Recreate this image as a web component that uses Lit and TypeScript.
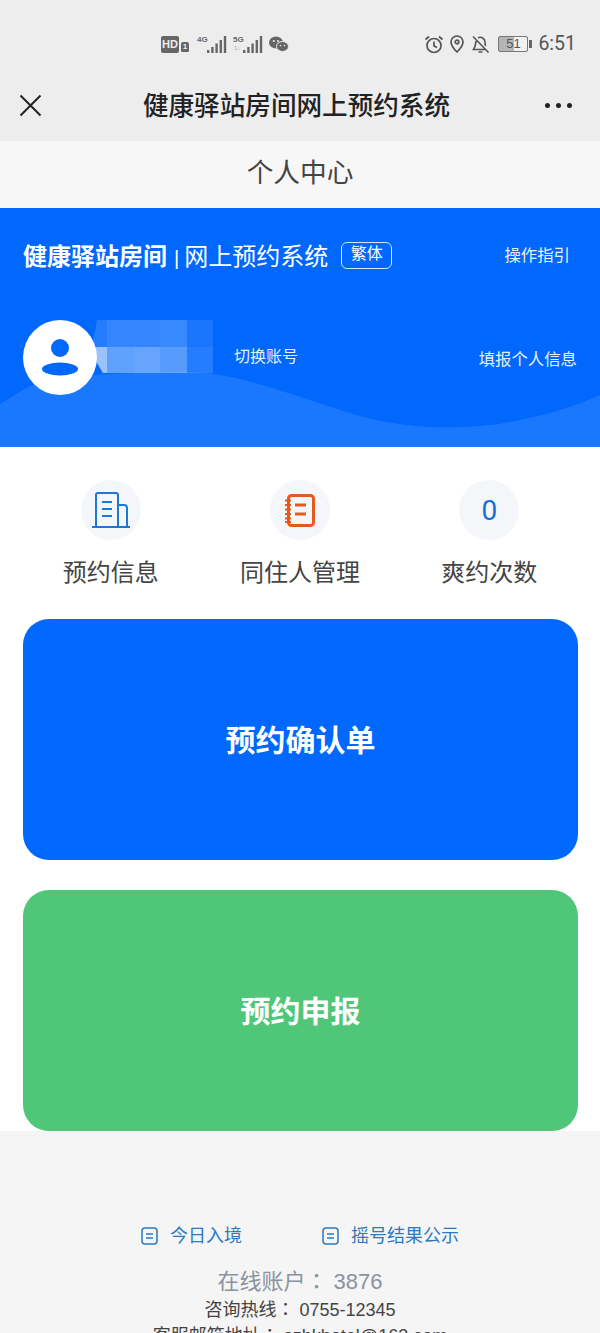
import { LitElement, css, html, svg } from 'lit'
import { customElement } from 'lit/decorators.js'

const bars = svg`<rect x="10" y="15" width="2.4" height="3" /><rect x="14.200" y="12" width="2.4" height="6" /><rect x="18.400" y="8.500" width="2.4" height="9.500" /><rect x="22.600" y="5" width="2.4" height="13" /><rect x="26.800" y="1" width="2.400" height="17" />`

const mosaic = [
  0.14, 0.2, 0.2, 0.22, 0.1,
  0.6, 0.38, 0.4, 0.34, 0.14,
]

const docIcon = html`<svg width="17" height="18" viewBox="0 0 17 18" fill="none" stroke="#2b79c2" stroke-width="1.5">
  <rect x="1" y="1" width="15" height="16" rx="3" />
  <path d="M5 7h7M5 11h7" />
</svg>`

@customElement('app-root')
export class AppRoot extends LitElement {
  static styles = css`
    :host {
      display: block;
      width: 600px;
      height: 1333px;
      overflow: hidden;
      background: #f5f5f5;
      font-family: 'Liberation Sans', 'Noto Sans CJK SC', sans-serif;
      color: #333;
    }
    .status {
      height: 70px;
      background: #ededed;
      display: flex;
      align-items: center;
      padding: 18px 24px 0 161px;
      box-sizing: border-box;
      color: #555;
    }
    .status svg {
      display: block;
      flex: none;
    }
    .hd {
      width: 18px;
      height: 17px;
      border-radius: 2px;
      background: #666;
      color: #eee;
      font: bold 11px/17px 'Liberation Sans', sans-serif;
      text-align: center;
    }
    .sim {
      width: 8px;
      height: 10px;
      margin: 6px 8px 0 2px;
      background: #666;
      border-radius: 2px 2px 1px 1px;
      color: #eee;
      font: bold 8px/10px 'Liberation Sans', sans-serif;
      text-align: center;
    }
    .net {
      position: relative;
      width: 30px;
      height: 18px;
      margin-right: 6px;
    }
    .net span {
      position: absolute;
      left: 0;
      top: 0;
      font: bold 8px/9px 'Liberation Sans', sans-serif;
      color: #666;
    }
    .net em {
      position: absolute;
      left: 1px;
      top: 10px;
      font: 6px/7px 'Liberation Sans', sans-serif;
      color: #aaa;
    }
    .spacer {
      flex: 1;
    }
    .pin {
      margin-left: 6px;
    }
    .bell {
      margin-left: 7px;
    }
    .battery {
      width: 30px;
      height: 16px;
      margin-left: 8px;
      border: 1px solid #777;
      border-radius: 2px;
      box-sizing: border-box;
      background: linear-gradient(90deg, #b5b5b5 55%, #f2f2f2 55%);
      font: 13px/14px 'Liberation Sans', sans-serif;
      text-align: center;
      color: #555;
    }
    .nub {
      width: 3px;
      height: 8px;
      margin: 0 6px 0 1px;
      background: #666;
    }
    .time {
      font: 19.500px/20px Roboto, sans-serif;
      color: #555;
    }
    .nav {
      height: 71px;
      background: #ededed;
      display: flex;
      align-items: center;
      justify-content: space-between;
      padding: 0 28px 0 19px;
      box-sizing: border-box;
    }
    .nav h1 {
      margin: 0 0 0 6px;
      font-size: 25.600px;
      font-weight: 500;
      line-height: 32px;
      color: #222;
    }
    .dots {
      display: flex;
      gap: 6px;
    }
    .dots i {
      width: 5px;
      height: 5px;
      border-radius: 50%;
      background: #222;
    }
    .sub {
      height: 67px;
      background: #f7f7f7;
      display: flex;
      align-items: center;
      justify-content: center;
      font-size: 26.700px;
      color: #444;
      padding-bottom: 8px;
      box-sizing: border-box;
    }
    .hero {
      position: relative;
      height: 239px;
      background: #0068fd;
      color: #fff;
      overflow: hidden;
      box-sizing: border-box;
      padding: 30px 23px 0;
    }
    .wave {
      position: absolute;
      left: 0;
      top: 0;
    }
    .hero-top,
    .hero-user {
      position: relative;
      display: flex;
      align-items: center;
    }
    .brand {
      font-size: 24px;
      line-height: 36px;
      white-space: nowrap;
      padding-top: 1px;
    }
    .brand b {
      font-weight: 700;
    }
    .sep {
      margin: 0 5px 0 7px;
      font-size: 20px;
      font-weight: 300;
    }
    .tag {
      margin: -4px 0 0 13px;
      width: 51px;
      height: 27px;
      border: 1.500px solid #d6e6ff;
      border-radius: 6px;
      box-sizing: border-box;
      font-size: 16px;
      line-height: 22px;
      text-align: center;
    }
    .guide {
      margin-left: auto;
      margin-right: 7px;
      margin-top: -7px;
      font-size: 16.400px;
      color: #e8f0ff;
    }
    .hero-user {
      margin-top: 44px;
    }
    .avatar {
      position: relative;
      width: 74px;
      height: 75px;
      border-radius: 50%;
      background: #fff;
      display: flex;
      align-items: center;
      justify-content: center;
      flex: none;
    }
    .mosaic {
      position: absolute;
      left: 69px;
      top: 0;
      display: grid;
      grid-template-columns: 15px repeat(4, 26.500px);
      grid-auto-rows: 26.500px;
      clip-path: polygon(5px 0, 121px 0, 121px 53px, 15px 53px, 15px 60px, 2px 38px, 0 25px);
    }
    .switch {
      margin-left: 137px;
      margin-top: -5px;
      font-size: 16px;
      color: #e8f0ff;
    }
    .fill {
      margin-left: auto;
      font-size: 16.400px;
      color: #e8f0ff;
    }
    .tiles {
      background: #fff;
      height: 172px;
      display: grid;
      grid-template-columns: repeat(3, 1fr);
      padding: 33px 16px 0;
      box-sizing: border-box;
    }
    .tile {
      display: flex;
      flex-direction: column;
      align-items: center;
      gap: 15px;
      font-size: 24px;
      line-height: 35px;
      color: #444;
    }
    .circle {
      width: 60px;
      height: 60px;
      border-radius: 50%;
      background: #f4f6fa;
      display: flex;
      align-items: center;
      justify-content: center;
    }
    .count {
      font: 28px Roboto, sans-serif;
      color: #1a6fd4;
    }
    .cards {
      background: #fff;
      padding: 0 22px 0 23px;
      display: flex;
      flex-direction: column;
      gap: 30px;
    }
    .card {
      height: 241px;
      border-radius: 26px;
      display: flex;
      align-items: center;
      justify-content: center;
      color: #fff;
      font-size: 30px;
      font-weight: 700;
      padding-bottom: 4px;
      box-sizing: border-box;
    }
    .blue {
      background: #0068fd;
    }
    .green {
      background: #50c678;
    }
    .foot {
      padding-top: 90px;
      text-align: center;
    }
    .links {
      display: flex;
      justify-content: center;
      gap: 80px;
      font-size: 18px;
      line-height: 30px;
      color: #2b79c2;
    }
    .links div {
      display: flex;
      align-items: center;
      gap: 12px;
    }
    .online {
      margin-top: 16px;
      font-size: 22px;
      line-height: 30px;
      color: #8b93a1;
    }
    .line {
      font-size: 18px;
      line-height: 26px;
      color: #444;
    }
    .colon {
      font-family: 'Noto Sans CJK TC', sans-serif;
      line-height: 0;
    }
  `

  render() {
    return html`
      <div class="status">
        <div class="hd">HD</div>
        <div class="sim">1</div>
        <div class="net">
          <span>4G</span>
          <svg width="30" height="18" fill="#666">${bars}</svg>
        </div>
        <div class="net">
          <span>5G</span>
          <em>1↓</em>
          <svg width="30" height="18" fill="#666">${bars}</svg>
        </div>
        <svg width="20" height="17" viewBox="0 0 20 17" fill="#666">
          <ellipse cx="7" cy="6.500" rx="7" ry="6" />
          <ellipse cx="13.500" cy="10.500" rx="6" ry="5" stroke="#ededed" />
          <circle cx="4.800" cy="5" r="1" fill="#ededed" />
          <circle cx="9" cy="5" r="1" fill="#ededed" />
          <circle cx="11.500" cy="9.500" r="0.800" fill="#ededed" />
          <circle cx="15.500" cy="9.500" r="0.800" fill="#ededed" />
        </svg>
        <div class="spacer"></div>
        <svg width="20" height="19" viewBox="0 0 20 19" fill="none" stroke="#555" stroke-width="1.700">
          <circle cx="10" cy="10.500" r="7" />
          <path d="M10 6.500v4.500l3 1.500M1.500 4.500 5 1.500M18.500 4.500 15 1.500" />
        </svg>
        <svg class="pin" width="14" height="18" viewBox="0 0 14 18" fill="none" stroke="#555" stroke-width="1.700">
          <path d="M7 17C3.500 13.500 1 10.500 1 7a6 6 0 0 1 12 0c0 3.500-2.500 6.500-6 10Z" />
          <circle cx="7" cy="7" r="1.800" />
        </svg>
        <svg class="bell" width="19" height="19" viewBox="0 0 19 19" fill="none" stroke="#555" stroke-width="1.600">
          <path d="M5 6C4.500 8 5 11.500 2.500 14.500h11.500M7 2.800A4.800 4.800 0 0 1 14 7c0 1.500.2 2.800.6 4M2 1.500 17.500 17.500M7.500 17h4" />
        </svg>
        <div class="battery">51</div>
        <div class="nub"></div>
        <div class="time">6:51</div>
      </div>
      <div class="nav">
        <svg width="23" height="23" viewBox="0 0 23 23" stroke="#222" stroke-width="2" fill="none">
          <path d="M1.500 1.500 21.500 21.500M21.500 1.500 1.500 21.500" />
        </svg>
        <h1>健康驿站房间网上预约系统</h1>
        <div class="dots"><i></i><i></i><i></i></div>
      </div>
      <div class="sub">个人中心</div>
      <div class="hero">
        <svg class="wave" width="600" height="239" viewBox="0 0 600 239">
          <path
            d="M0 196C14 188 24 180 40 174C80 166 140 164 190 164C240 165 300 190 360 208C410 222 470 223 520 212C555 205 580 196 600 187V239H0Z"
            fill="#1a78ff"
          />
        </svg>
        <div class="hero-top">
          <div class="brand"><b>健康驿站房间</b><span class="sep">|</span>网上预约系统</div>
          <div class="tag">繁体</div>
          <div class="guide">操作指引</div>
        </div>
        <div class="hero-user">
          <div class="mosaic">
            ${mosaic.map(
              (a) => html`<i style="background: rgba(255,255,255,${a})"></i>`
            )}
          </div>
          <div class="avatar">
            <svg width="36" height="37" viewBox="0 0 36 37" fill="#0068fd">
              <circle cx="18" cy="9" r="9" />
              <ellipse cx="18" cy="30" rx="18" ry="6.500" />
            </svg>
          </div>
          <div class="switch">切换账号</div>
          <div class="fill">填报个人信息</div>
        </div>
      </div>
      <div class="tiles">
        <div class="tile">
          <div class="circle">
            <svg width="38" height="36" viewBox="0 0 38 36" fill="none" stroke="#1a78d8" stroke-width="2">
              <path d="M0 35H38M4 35V3a2 2 0 0 1 2-2H24a2 2 0 0 1 2 2V35M26 13h6a3 3 0 0 1 3 3V35M10 10h10M10 17h10M10 24h10" />
            </svg>
          </div>
          预约信息
        </div>
        <div class="tile">
          <div class="circle">
            <svg width="30" height="33" viewBox="0 0 30 33" fill="none" stroke="#e85a1c" stroke-width="3">
              <rect x="3.500" y="1.500" width="25" height="30" rx="3" />
              <path d="M10 11h11M10 20h11" />
              <path d="M0 6.500h6M0 11h6M0 15.500h6M0 20h6M0 24.500h6M0 28h6" stroke-width="2" />
            </svg>
          </div>
          同住人管理
        </div>
        <div class="tile">
          <div class="circle"><span class="count">0</span></div>
          爽约次数
        </div>
      </div>
      <div class="cards">
        <div class="card blue">预约确认单</div>
        <div class="card green">预约申报</div>
      </div>
      <div class="foot">
        <div class="links">
          <div>${docIcon}今日入境</div>
          <div>${docIcon}摇号结果公示</div>
        </div>
        <div class="online">在线账户<span class="colon">：</span> 3876</div>
        <div class="line">咨询热线<span class="colon">：</span> 0755-12345</div>
        <div class="line">客服邮箱地址<span class="colon">：</span> szhkhotel@163.com</div>
      </div>
    `
  }
}
